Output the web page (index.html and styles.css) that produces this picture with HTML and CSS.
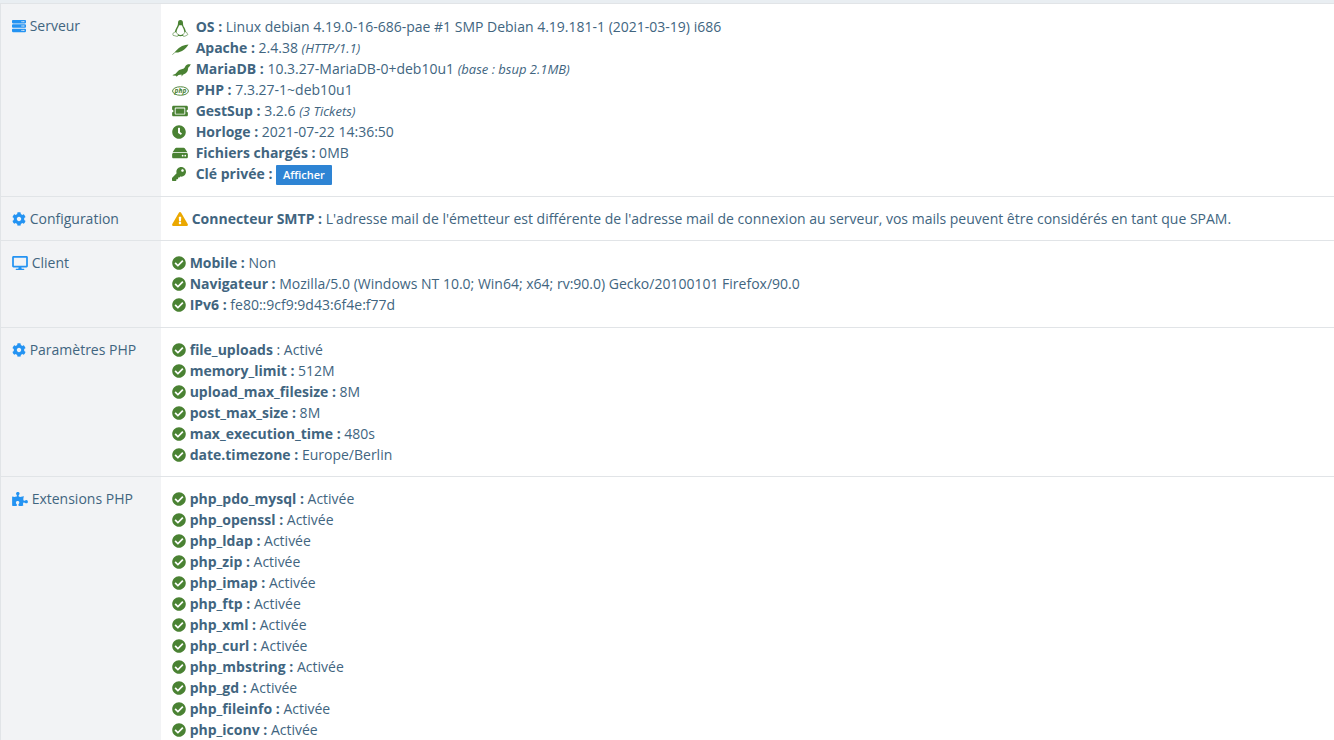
FILE: index.html
```html
<!DOCTYPE html>
<html lang="fr">
<head>
    <meta charset="UTF-8">
    <meta name="viewport" content="width=device-width, initial-scale=1.0">
    <title>GestSup - Système</title>
    <link rel="stylesheet" href="styles.css">
</head>
<body>
    <!-- Icon definitions -->
    <svg class="sprite" aria-hidden="true">
        <symbol id="server" viewBox="0 0 512 512"><path fill-rule="evenodd" d="M480 160H32c-18 0-32-14-32-32V64c0-18 14-32 32-32h448c18 0 32 14 32 32v64c0 18-14 32-32 32zM432 72a24 24 0 1 0 0 48 24 24 0 0 0 0-48zm-64 0a24 24 0 1 0 0 48 24 24 0 0 0 0-48zM480 320H32c-18 0-32-14-32-32v-64c0-18 14-32 32-32h448c18 0 32 14 32 32v64c0 18-14 32-32 32zM432 232a24 24 0 1 0 0 48 24 24 0 0 0 0-48zm-64 0a24 24 0 1 0 0 48 24 24 0 0 0 0-48zM480 480H32c-18 0-32-14-32-32v-64c0-18 14-32 32-32h448c18 0 32 14 32 32v64c0 18-14 32-32 32zM432 392a24 24 0 1 0 0 48 24 24 0 0 0 0-48zm-64 0a24 24 0 1 0 0 48 24 24 0 0 0 0-48z"/></symbol>
        <symbol id="cog" viewBox="0 0 512 512"><path d="M487.4 315.7l-42.6-24.6c4.3-23.2 4.3-47 0-70.2l42.6-24.6c4.9-2.8 7.1-8.6 5.5-14-11.1-35.6-30-67.8-54.7-94.6-3.8-4.1-10-5.1-14.8-2.3L380.8 110c-17.9-15.4-38.5-27.3-60.8-35.1V25.8c0-5.6-3.9-10.5-9.4-11.7-36.7-8.2-74.3-7.8-109.2 0-5.5 1.2-9.4 6.1-9.4 11.7V75c-22.2 7.9-42.8 19.8-60.8 35.1L88.7 85.5c-4.9-2.8-11-1.9-14.8 2.3-24.7 26.7-43.6 58.9-54.7 94.6-1.7 5.4.6 11.2 5.5 14L67.3 221c-4.3 23.2-4.3 47 0 70.2l-42.6 24.6c-4.9 2.8-7.1 8.6-5.5 14 11.1 35.6 30 67.8 54.7 94.6 3.8 4.1 10 5.1 14.8 2.3l42.6-24.6c17.9 15.4 38.5 27.3 60.8 35.1v49.2c0 5.6 3.9 10.5 9.4 11.7 36.7 8.2 74.3 7.8 109.2 0 5.5-1.2 9.4-6.1 9.4-11.7v-49.2c22.2-7.9 42.8-19.8 60.8-35.1l42.6 24.6c4.9 2.8 11 1.9 14.8-2.3 24.7-26.7 43.6-58.9 54.7-94.6 1.5-5.5-.7-11.3-5.6-14.1zM256 336c-44.1 0-80-35.9-80-80s35.9-80 80-80 80 35.9 80 80-35.9 80-80 80z"/></symbol>
        <symbol id="desktop" viewBox="0 0 576 512"><path d="M528 0H48C21.5 0 0 21.5 0 48v320c0 26.5 21.5 48 48 48h192l-16 48h-72c-13.3 0-24 10.7-24 24s10.7 24 24 24h272c13.3 0 24-10.7 24-24s-10.7-24-24-24h-72l-16-48h192c26.5 0 48-21.5 48-48V48c0-26.5-21.5-48-48-48zm-16 352H64V64h448v288z"/></symbol>
        <symbol id="puzzle" viewBox="0 0 576 512"><path d="M519.442 288.651c-41.519 0-59.5 31.593-82.058 31.593C377.409 320.244 432 144 432 144s-196.288 80-196.288-3.297c0-35.827 36.288-46.25 36.288-85.985C272 19.216 243.885 0 210.539 0c-34.654 0-66.366 18.891-66.366 56.346 0 41.364 31.711 59.277 31.711 81.75C175.885 207.719 0 166.758 0 166.758v333.237s178.635 41.047 178.635-28.662c0-22.473-40-40.107-40-81.471 0-37.456 29.25-56.346 63.577-56.346 33.673 0 61.788 19.216 61.788 54.717 0 39.735-36.288 50.158-36.288 85.985 0 60.803 129.675 25.73 181.23 25.73 0 0-34.725-120.101 25.827-120.101 35.962 0 46.423 36.152 86.308 36.152C556.712 416 576 387.99 576 354.443c0-34.199-18.962-65.792-56.558-65.792z"/></symbol>
        <symbol id="check" viewBox="0 0 512 512"><path d="M504 256c0 136.967-111.033 248-248 248S8 392.967 8 256 119.033 8 256 8s248 111.033 248 248zM227.314 387.314l184-184c6.248-6.248 6.248-16.379 0-22.627l-22.627-22.627c-6.248-6.249-16.379-6.249-22.628 0L216 308.118l-70.059-70.059c-6.248-6.248-16.379-6.248-22.628 0l-22.627 22.627c-6.248 6.248-6.248 16.379 0 22.627l104 104c6.249 6.249 16.379 6.249 22.628.001z"/></symbol>
        <symbol id="warning" viewBox="0 0 576 512"><path d="M569.517 440.013C587.975 472.007 564.806 512 527.94 512H48.054c-36.937 0-59.999-40.055-41.577-71.987L246.423 23.985c18.467-32.009 64.72-31.951 83.154 0l239.94 416.028zM288 354c-25.405 0-46 20.595-46 46s20.595 46 46 46 46-20.595 46-46-20.595-46-46-46zm-43.673-165.346l7.418 136c.347 6.364 5.609 11.346 11.982 11.346h48.546c6.373 0 11.635-4.982 11.982-11.346l7.418-136c.375-6.874-5.098-12.654-11.982-12.654h-63.383c-6.884 0-12.356 5.78-11.981 12.654z"/></symbol>
        <symbol id="ticket" viewBox="0 0 576 512"><path d="M128 160h320v192H128V160zm400 96c0 26.51 21.49 48 48 48v96c0 26.51-21.49 48-48 48H48c-26.51 0-48-21.49-48-48v-96c26.51 0 48-21.49 48-48s-21.49-48-48-48v-96c0-26.51 21.49-48 48-48h480c26.51 0 48 21.49 48 48v96c-26.51 0-48 21.49-48 48zm-48-104c0-13.255-10.745-24-24-24H120c-13.255 0-24 10.745-24 24v208c0 13.255 10.745 24 24 24h336c13.255 0 24-10.745 24-24V152z"/></symbol>
        <symbol id="clock" viewBox="0 0 512 512"><path d="M256 8C119 8 8 119 8 256s111 248 248 248 248-111 248-248S393 8 256 8zm57.100 350.100L224.900 294c-3.100-2.300-4.900-5.900-4.900-9.700V116a12 12 0 0 1 12-12h48a12 12 0 0 1 12 12v137.700l63.500 46.200a12 12 0 0 1 2.600 16.800l-28.200 38.800a12 12 0 0 1-16.800 2.600z"/></symbol>
        <symbol id="hdd" viewBox="0 0 576 512"><path fill-rule="evenodd" d="M576 304v96c0 26.51-21.49 48-48 48H48c-26.51 0-48-21.49-48-48v-96c0-26.51 21.49-48 48-48h480c26.51 0 48 21.49 48 48zM528 224a79.557 79.557 0 0 1 30.777 6.165L462.25 85.374A48.003 48.003 0 0 0 422.311 64H153.689a48 48 0 0 0-39.938 21.374L17.223 230.165A79.557 79.557 0 0 1 48 224h480zM480 320a32 32 0 1 0 0 64 32 32 0 0 0 0-64zm-96 0a32 32 0 1 0 0 64 32 32 0 0 0 0-64z"/></symbol>
        <symbol id="key" viewBox="0 0 512 512"><path d="M512 176.001C512 273.203 433.202 352 336 352c-11.22 0-22.19-1.062-32.827-3.069l-24.012 27.014A23.999 23.999 0 0 1 261.223 384H224v40c0 13.255-10.745 24-24 24h-40v40c0 13.255-10.745 24-24 24H24c-13.255 0-24-10.745-24-24v-78.059c0-6.365 2.529-12.47 7.029-16.971l161.802-161.802C163.108 213.814 160 195.271 160 176 160 78.798 238.797.001 335.999 0 433.488-.001 512 78.511 512 176.001zM336 128c0 26.51 21.49 48 48 48s48-21.49 48-48-21.49-48-48-48-48 21.49-48 48z"/></symbol>
        <symbol id="linux" viewBox="0 0 17 17">
            <path fill-rule="evenodd" d="M8.500 0C6.700 0 6 1.200 6 3c0 2-.6 3.200-1.700 5C3.500 9.300 3 10.700 2.900 12l1.600.4c.2-2 .8-3.600 1.700-5 .5-.7.700-1.900 1.200-2.100h2.300c.6.700.7 1.400 1.100 2.100.8 1.400 1.400 2.900 1.500 4.800l1.500-.5c-.2-1.800-.9-3.200-1.800-4.600C11.300 5.800 11 4.800 11 3c0-1.900-.8-3-2.500-3zM6 14.300c1.500.9 3.500.9 5 0l.2 1.500c-1.700.6-3.700.6-5.400 0z"/>
            <path class="thin faint" d="M3.500 11.500l2.800 3.400c0 1.500-1 1.700-2.300 1.200l-3-.8c-.5-.5.2-1.200.1-2 .3-.8 1.300-.6 2.400-1.800zM13.600 11.500l-2.800 3.400c0 1.500 1 1.700 2.300 1.200l2.500-1.300c.5-.6-.6-1.100-.5-2-.4-.4-.7.2-1.500-1.300z"/>
        </symbol>
        <symbol id="apache" viewBox="0 0 17 12">
            <path d="M16.500 1.500c-4 0-9 2.200-12.500 6.300L3 9.200c1 .5 3 .4 4.500-.2 3.500-1 6.500-3.500 8-6z"/>
            <path class="thin faint" d="M4 8.500L.4 11.600"/>
        </symbol>
        <symbol id="mariadb" viewBox="0 0 19 14"><path d="M18.700 1c-1.700.4-3.200.2-4.200.9-1.300 1-1.500 2.600-2.700 3.700C10 6.700 7.600 6.300 6 8c-1.200 1.200-1.800 2.700-3.500 3.200l-1.900.7.3.6 3.200.3.4 1 2-1.700 3-.5.2 1.900 1.200-1.700 2.500-1.200c1.800-1.100 2.400-2.500 2.600-4.500.2-1.500.8-2.200 1.900-3.100z"/></symbol>
        <symbol id="php" viewBox="0 0 18 12">
            <ellipse class="thin" cx="9" cy="6" rx="8.400" ry="4.500"/>
            <text class="php-text" x="9" y="8" text-anchor="middle">php</text>
        </symbol>
    </svg>

    <table class="system">
        <tbody>
            <tr class="tall">
                <th scope="row"><svg class="icon blue"><use href="#server"/></svg> Serveur</th>
                <td>
                    <ul class="server-list">
                        <li><span class="slot"><svg class="logo"><use href="#linux"/></svg></span> <b>OS :</b> Linux debian 4.19.0-16-686-pae #1 SMP Debian 4.19.181-1 (2021-03-19) i686</li>
                        <li><span class="slot"><svg class="logo short"><use href="#apache"/></svg></span> <b>Apache :</b> 2.4.38 <i>(HTTP/1.1)</i></li>
                        <li><span class="slot"><svg class="logo bird"><use href="#mariadb"/></svg></span> <b>MariaDB :</b> 10.3.27-MariaDB-0+deb10u1 <i>(base : bsup 2.1MB)</i></li>
                        <li><span class="slot"><svg class="logo short"><use href="#php"/></svg></span> <b>PHP :</b> 7.3.27-1~deb10u1</li>
                        <li><span class="slot"><svg class="icon wide"><use href="#ticket"/></svg></span> <b>GestSup :</b> 3.2.6 <i>(3 Tickets)</i></li>
                        <li><span class="slot"><svg class="icon"><use href="#clock"/></svg></span> <b>Horloge :</b> 2021-07-22 14:36:50</li>
                        <li><span class="slot"><svg class="icon wide"><use href="#hdd"/></svg></span> <b>Fichiers chargés :</b> 0MB</li>
                        <li><span class="slot"><svg class="icon"><use href="#key"/></svg></span> <b>Clé privée :</b> <button type="button">Afficher</button></li>
                    </ul>
                </td>
            </tr>
            <tr>
                <th scope="row"><svg class="icon blue"><use href="#cog"/></svg> Configuration</th>
                <td>
                    <ul>
                        <li><svg class="icon wide orange"><use href="#warning"/></svg> <b>Connecteur SMTP :</b> L'adresse mail de l'émetteur est différente de l'adresse mail de connexion au serveur, vos mails peuvent être considérés en tant que SPAM.</li>
                    </ul>
                </td>
            </tr>
            <tr class="tall">
                <th scope="row"><svg class="icon wide blue"><use href="#desktop"/></svg> Client</th>
                <td>
                    <ul>
                        <li><svg class="icon"><use href="#check"/></svg> <b>Mobile :</b> Non</li>
                        <li><svg class="icon"><use href="#check"/></svg> <b>Navigateur :</b> Mozilla/5.0 (Windows NT 10.0; Win64; x64; rv:90.0) Gecko/20100101 Firefox/90.0</li>
                        <li><svg class="icon"><use href="#check"/></svg> <b>IPv6 :</b> fe80::9cf9:9d43:6f4e:f77d</li>
                    </ul>
                </td>
            </tr>
            <tr>
                <th scope="row"><svg class="icon blue"><use href="#cog"/></svg> Paramètres PHP</th>
                <td>
                    <ul>
                        <li><svg class="icon"><use href="#check"/></svg> <b>file_uploads</b> : Activé</li>
                        <li><svg class="icon"><use href="#check"/></svg> <b>memory_limit :</b> 512M</li>
                        <li><svg class="icon"><use href="#check"/></svg> <b>upload_max_filesize :</b> 8M</li>
                        <li><svg class="icon"><use href="#check"/></svg> <b>post_max_size :</b> 8M</li>
                        <li><svg class="icon"><use href="#check"/></svg> <b>max_execution_time :</b> 480s</li>
                        <li><svg class="icon"><use href="#check"/></svg> <b>date.timezone :</b> Europe/Berlin</li>
                    </ul>
                </td>
            </tr>
            <tr>
                <th scope="row"><svg class="icon wide blue"><use href="#puzzle"/></svg> Extensions PHP</th>
                <td>
                    <ul>
                        <li><svg class="icon"><use href="#check"/></svg> <b>php_pdo_mysql :</b> Activée</li>
                        <li><svg class="icon"><use href="#check"/></svg> <b>php_openssl :</b> Activée</li>
                        <li><svg class="icon"><use href="#check"/></svg> <b>php_ldap :</b> Activée</li>
                        <li><svg class="icon"><use href="#check"/></svg> <b>php_zip :</b> Activée</li>
                        <li><svg class="icon"><use href="#check"/></svg> <b>php_imap :</b> Activée</li>
                        <li><svg class="icon"><use href="#check"/></svg> <b>php_ftp :</b> Activée</li>
                        <li><svg class="icon"><use href="#check"/></svg> <b>php_xml :</b> Activée</li>
                        <li><svg class="icon"><use href="#check"/></svg> <b>php_curl :</b> Activée</li>
                        <li><svg class="icon"><use href="#check"/></svg> <b>php_mbstring :</b> Activée</li>
                        <li><svg class="icon"><use href="#check"/></svg> <b>php_gd :</b> Activée</li>
                        <li><svg class="icon"><use href="#check"/></svg> <b>php_fileinfo :</b> Activée</li>
                        <li><svg class="icon"><use href="#check"/></svg> <b>php_iconv :</b> Activée</li>
                    </ul>
                </td>
            </tr>
        </tbody>
    </table>
</body>
</html>
```
FILE: styles.css
```css
body {
    margin: 0;
    padding-top: 3px;
    background-color: #e9eef2;
    color: #41657f;
    font-family: "Open Sans", sans-serif;
    font-size: 14px;
    line-height: 21px;
}

.sprite {
    display: none;
}

.system {
    width: 100%;
    border-collapse: separate;
    border-spacing: 0;
    border-left: 1px solid #e1e4e7;
    background-color: white;
}

th, td {
    padding: 11px;
    border-top: 1px solid #e1e4e7;
    vertical-align: top;
    text-align: left;
}

th {
    width: 138px;
    background-color: #f2f3f5;
    font-weight: normal;
    white-space: nowrap;
}

.tall th, .tall td {
    padding-bottom: 12px;
}

ul {
    margin: 0;
    padding: 0;
    list-style: none;
}

b {
    font-weight: bold;
}

i {
    font-size: 13px;
    line-height: 1;
}

.icon {
    width: 14px;
    height: 14px;
    vertical-align: -2px;
    fill: #4a8233;
}

.wide {
    width: 16px;
}

.blue {
    fill: #2493f2;
}

.orange {
    fill: #eba800;
}

.slot {
    display: inline-block;
    width: 20px;
    line-height: 1;
}

.logo {
    width: 17px;
    height: 17px;
    vertical-align: -5px;
    fill: #4a8233;
}

.short {
    height: 12px;
    vertical-align: -2px;
}

.bird {
    width: 19px;
    height: 14px;
    vertical-align: -3px;
}

.server-list {
    padding-top: 1px;
}

.thin {
    fill: none;
    stroke: #4a8233;
    stroke-width: 1;
}

.faint {
    opacity: 0.6;
}

.php-text {
    font-family: "Open Sans", sans-serif;
    font-size: 7px;
    font-style: italic;
    font-weight: bold;
}

button {
    height: 20px;
    margin: -2px 0;
    padding: 0 7px;
    border: none;
    border-radius: 1px;
    background-color: #2e84d4;
    color: white;
    font-family: inherit;
    font-size: 11px;
    font-weight: 600;
    line-height: 20px;
    vertical-align: middle;
    cursor: pointer;
}
```
